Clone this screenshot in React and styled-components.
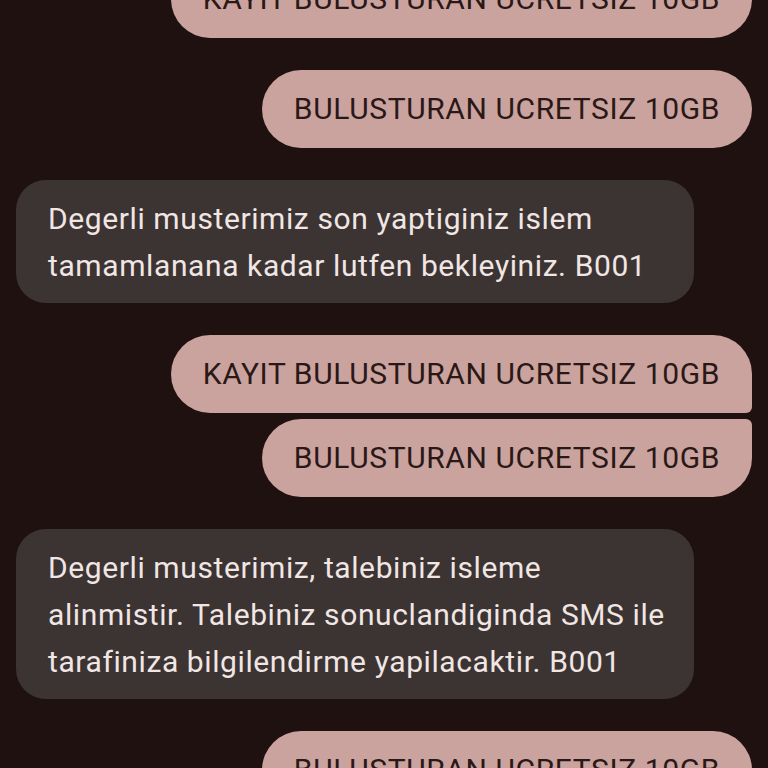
import React from 'react'
import styled, { createGlobalStyle } from 'styled-components'

const GlobalStyle = createGlobalStyle`
  html, body {
    margin: 0;
    padding: 0;
    background: #1f1110;
    overflow: hidden;
  }
  body {
    font-family: Roboto, "Noto Sans", sans-serif;
  }
`

const Screen = styled.div`
  width: 768px;
  height: 768px;
  overflow: hidden;
  background: #1f1110;
`

const Thread = styled.div`
  display: flex;
  flex-direction: column;
  gap: 32px;
  padding: 0 16px;
  margin-top: -40px;
`

const Group = styled.div`
  display: flex;
  flex-direction: column;
  align-items: ${p => (p.$out ? 'flex-end' : 'flex-start')};
  gap: 6px;
`

const Bubble = styled.div`
  box-sizing: border-box;
  font-size: 30px;
  line-height: 47px;
  letter-spacing: 0.6px;
  padding: 15px 32px 16px;
  max-width: 678px;
`

const OutBubble = styled(Bubble)`
  background: #cba39e;
  color: #2a1817;
  border-radius: ${p =>
    p.$pos === 'first'
      ? '39px 39px 6px 39px'
      : p.$pos === 'last'
      ? '39px 6px 39px 39px'
      : '39px'};
  white-space: nowrap;
`

const InBubble = styled(Bubble)`
  background: #3b3433;
  color: #f1e6e4;
  border-radius: 30px;
  width: 678px;
  padding: 15px 24px 14px 32px;
`

const groups = [
  { out: true, msgs: ['KAYIT BULUSTURAN UCRETSIZ 10GB'] },
  { out: true, msgs: ['BULUSTURAN UCRETSIZ 10GB'] },
  {
    out: false,
    msgs: ['Degerli musterimiz son yaptiginiz islem tamamlanana kadar lutfen bekleyiniz. B001'],
  },
  { out: true, msgs: ['KAYIT BULUSTURAN UCRETSIZ 10GB', 'BULUSTURAN UCRETSIZ 10GB'] },
  {
    out: false,
    msgs: [
      'Degerli musterimiz, talebiniz isleme alinmistir. Talebiniz sonuclandiginda SMS ile tarafiniza bilgilendirme yapilacaktir. B001',
    ],
  },
  { out: true, msgs: ['BULUSTURAN UCRETSIZ 10GB'] },
]

export default function App() {
  return (
    <Screen>
      <GlobalStyle />
      <Thread>
        {groups.map((g, i) => (
          <Group key={i} $out={g.out}>
            {g.msgs.map((m, j) => {
              if (!g.out) return <InBubble key={j}>{m}</InBubble>
              let pos = 'single'
              if (g.msgs.length > 1) pos = j === 0 ? 'first' : j === g.msgs.length - 1 ? 'last' : 'mid'
              return (
                <OutBubble key={j} $pos={pos}>
                  {m}
                </OutBubble>
              )
            })}
          </Group>
        ))}
      </Thread>
    </Screen>
  )
}
